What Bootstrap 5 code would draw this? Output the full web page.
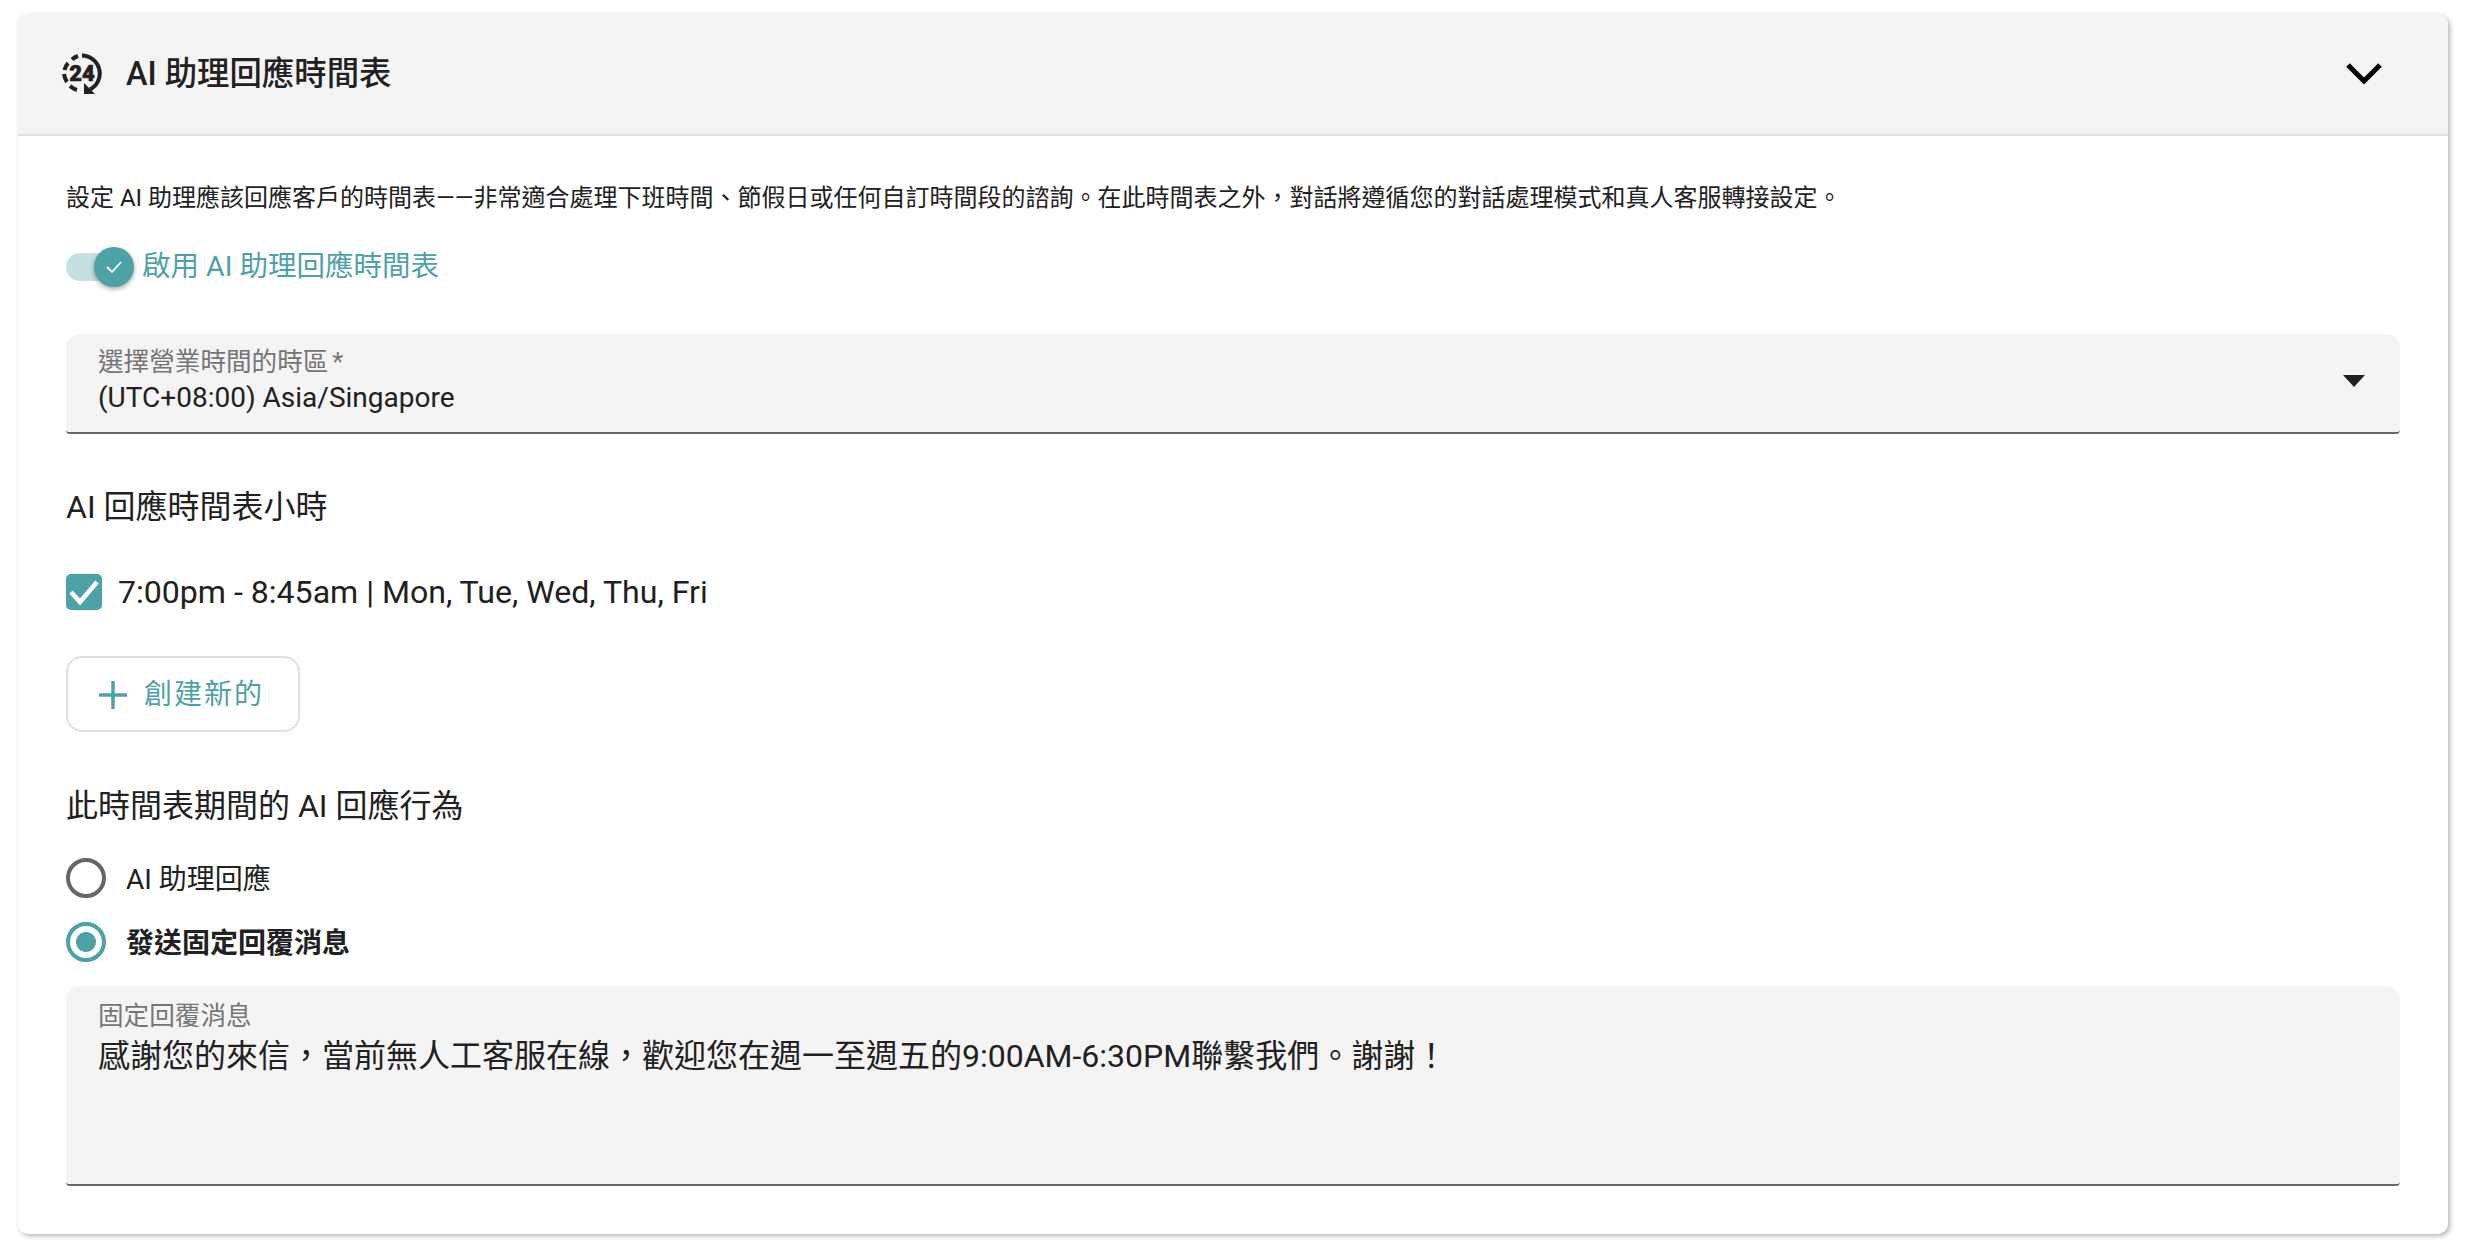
<!DOCTYPE html>
<html lang="zh-Hant">
<head>
    <meta charset="UTF-8">
    <title>AI 助理回應時間表</title>
    <meta name="viewport" content="width=device-width, initial-scale=1.0">
    <link href="https://cdn.jsdelivr.net/npm/bootstrap@5.3.3/dist/css/bootstrap.min.css" rel="stylesheet">
    <style>
        body {
            background-color: #fff;
            font-family: Roboto, "Noto Sans CJK TC", sans-serif;
            color: #212121;
            padding: 14px 20px 20px 18px;
        }

        .schedule-card {
            border: 0;
            border-radius: 10px;
            box-shadow: 2px 2px 5px rgba(0, 0, 0, 0.3);
            overflow: hidden;
            height: 1220px;
        }

        .schedule-head {
            background-color: #f4f4f4;
            border-bottom: 2px solid #e0e0e0;
            height: 122px;
            padding: 0 66px 0 44px;
        }

        .schedule-title {
            font-size: 32.4px;
            font-weight: 500;
            margin: 0 0 0 24px;
            line-height: 1;
        }

        .head-chevron {
            margin-bottom: 2px;
        }

        .schedule-body {
            padding: 47px 48px 0;
        }

        .intro-text {
            font-size: 24px;
            line-height: 30px;
            margin-bottom: 34px;
        }

        .switch-track {
            width: 58px;
            height: 28px;
            border-radius: 14px;
            background-color: #c6e0e2;
            position: relative;
        }

        .switch-knob {
            position: absolute;
            right: -10px;
            top: -6px;
            width: 40px;
            height: 40px;
            border-radius: 50%;
            background-color: #4da2a8;
            box-shadow: 0 2px 5px rgba(0, 0, 0, 0.35);
        }

        .switch-text {
            font-size: 28.5px;
            color: #4da2a8;
            margin-left: 18px;
            line-height: 40px;
        }

        .filled-field {
            background-color: #f4f4f4;
            border-bottom: 2px solid #666;
            border-radius: 14px 14px 4px 4px;
            padding: 12px 32px 0;
        }

        .select-field {
            height: 100px;
            margin-top: 47px;
            padding-right: 35px;
        }

        .select-caret {
            margin-bottom: 16px;
        }

        .field-label {
            font-size: 25.6px;
            line-height: 32px;
            color: #757575;
        }

        .field-label-star {
            margin-left: 4px;
        }

        .field-value {
            font-size: 28px;
            line-height: 40px;
            color: #212121;
        }

        .section-title {
            font-size: 32px;
            line-height: 40px;
            font-weight: 400;
            margin: 0;
        }

        .hours-title {
            margin-top: 53px;
        }

        .hours-row {
            margin-top: 44px;
        }

        .schedule-check.form-check-input {
            width: 36px;
            height: 36px;
            margin: 0;
            border: 0;
            border-radius: 5px;
            background-color: #4da2a8;
            background-size: 36px;
            background-image: url("data:image/svg+xml,%3Csvg xmlns='http://www.w3.org/2000/svg' viewBox='0 0 36 36'%3E%3Cpath fill='none' stroke='%23fff' stroke-width='4.5' d='M5 18l9 10L31 8'/%3E%3C/svg%3E");
            opacity: 1;
        }

        .hours-text {
            font-size: 32.1px;
            line-height: 40px;
            margin-left: 16px;
            padding-top: 1px;
        }

        .add-btn {
            width: 234px;
            height: 76px;
            margin-top: 44px;
            background-color: #fff;
            border: 2px solid #e0e0e0;
            border-radius: 16px;
            color: #4da2a8;
            font-size: 28px;
            letter-spacing: 2px;
            padding: 2px 0 0 31px;
        }

        .add-btn:hover {
            color: #4da2a8;
            border-color: #e0e0e0;
        }

        .add-plus {
            margin-right: 17px;
        }

        .behaviour-title {
            margin-top: 54px;
        }

        .reply-radio.form-check-input {
            width: 40px;
            height: 40px;
            margin: 0;
            border: 4px solid #666;
            background-color: #fff;
            background-image: none;
            opacity: 1;
        }

        .reply-radio.form-check-input:checked {
            border-color: #4da2a8;
            background-color: #fff;
            background-image: radial-gradient(circle, #4da2a8 0, #4da2a8 9.5px, transparent 10.5px);
        }

        .radio-text {
            font-size: 28px;
            line-height: 40px;
            margin-left: 20px;
            padding-top: 3px;
        }

        .radio-row {
            height: 40px;
            margin-top: 24px;
        }

        .radio-row-first {
            margin-top: 32px;
        }

        .message-field {
            height: 200px;
            margin-top: 24px;
            padding-top: 14px;
        }

        .message-text {
            font-size: 32px;
            line-height: 44px;
            margin-top: 2px;
        }
    </style>
</head>
<body>
    <div class="card schedule-card">
        <div class="card-header schedule-head d-flex align-items-center">
            <!-- 24h icon -->
            <svg width="40" height="42" viewBox="0 0 40 42" fill="none">
                <path d="M20 2.5a18 18 0 0 1 8 34" stroke="#212121" stroke-width="4"/>
                <path d="M16 3a18 18 0 0 0-6 3.500M6 10a18 18 0 0 0-3.500 7M2 21a18 18 0 0 0 3 8M8 33a18 18 0 0 0 7 4" stroke="#212121" stroke-width="4"/>
                <path d="M22 30v11h11l-4-4-3-3z" fill="#212121"/>
                <text x="20" y="28" text-anchor="middle" font-family="Roboto, sans-serif" font-weight="900" font-size="22" stroke="#212121" stroke-width="0.6" fill="#212121">24</text>
            </svg>
            <h2 class="schedule-title">AI 助理回應時間表</h2>
            <svg class="ms-auto head-chevron" width="36" height="22" viewBox="0 0 36 22" fill="none">
                <path d="M2 3l16 16L34 3" stroke="#000" stroke-width="5"/>
            </svg>
        </div>
        <div class="card-body schedule-body">
            <p class="intro-text">設定 AI 助理應該回應客戶的時間表——非常適合處理下班時間、節假日或任何自訂時間段的諮詢。在此時間表之外，對話將遵循您的對話處理模式和真人客服轉接設定。</p>

            <div class="d-flex align-items-center">
                <div class="switch-track">
                    <div class="switch-knob d-flex align-items-center justify-content-center">
                        <svg width="16" height="14" viewBox="0 0 16 14" fill="none">
                            <path d="M1 7l5 5L15 2" stroke="#fff" stroke-width="1.8"/>
                        </svg>
                    </div>
                </div>
                <span class="switch-text">啟用 AI 助理回應時間表</span>
            </div>

            <div class="filled-field select-field d-flex align-items-center justify-content-between">
                <div class="align-self-start">
                    <div class="field-label">選擇營業時間的時區<span class="field-label-star">*</span></div>
                    <div class="field-value">(UTC+08:00) Asia/Singapore</div>
                </div>
                <svg class="select-caret" width="22" height="12" viewBox="0 0 22 12"><path d="M0 0h22L11 12z" fill="#212121"/></svg>
            </div>

            <h3 class="section-title hours-title">AI 回應時間表小時</h3>

            <div class="hours-row d-flex align-items-center">
                <input class="form-check-input schedule-check" type="checkbox" checked>
                <span class="hours-text">7:00pm - 8:45am | Mon, Tue, Wed, Thu, Fri</span>
            </div>

            <button class="btn add-btn d-flex align-items-center" type="button">
                <svg width="28" height="28" viewBox="0 0 28 28" class="add-plus"><path d="M14 0v28M0 14h28" stroke="#4da2a8" stroke-width="3.5"/></svg>
                創建新的
            </button>

            <h3 class="section-title behaviour-title">此時間表期間的 AI 回應行為</h3>

            <div class="radio-row radio-row-first d-flex align-items-center">
                <input class="form-check-input reply-radio" type="radio" name="reply">
                <span class="radio-text">AI 助理回應</span>
            </div>
            <div class="radio-row d-flex align-items-center">
                <input class="form-check-input reply-radio" type="radio" name="reply" checked>
                <span class="radio-text fw-bold">發送固定回覆消息</span>
            </div>

            <div class="filled-field message-field">
                <div class="field-label">固定回覆消息</div>
                <div class="message-text">感謝您的來信，當前無人工客服在線，歡迎您在週一至週五的9:00AM-6:30PM聯繫我們。謝謝！</div>
            </div>
        </div>
    </div>

    <script src="https://cdn.jsdelivr.net/npm/bootstrap@5.3.3/dist/js/bootstrap.bundle.min.js"></script>
</body>
</html>
